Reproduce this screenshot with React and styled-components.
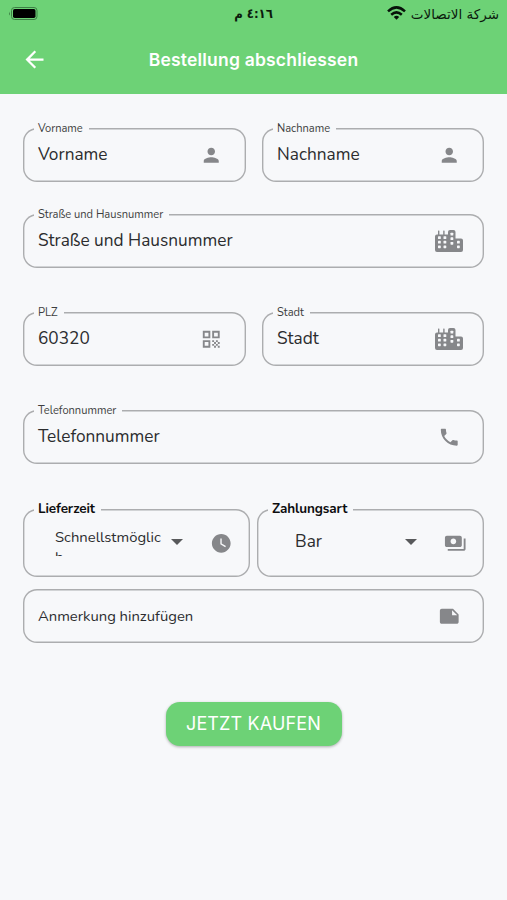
import React from "react";
import styled, { createGlobalStyle } from "styled-components";
import {
  MdArrowBack,
  MdPerson,
  MdQrCode,
  MdPhone,
  MdWatchLater,
  MdPayments,
  MdNote,
} from "react-icons/md";

const green = "#6dd276";
const surface = "#f7f8fa";

const GlobalStyle = createGlobalStyle`
  * { box-sizing: border-box; }
  body { margin: 0; background: ${surface}; }
  button, input { font: inherit; }
`;

const Screen = styled.div`
  width: 507px;
  height: 900px;
  overflow: hidden;
  background: ${surface};
  font-family: "Nunito", "Lato", sans-serif;
  color: #2b2c2e;
`;

const Header = styled.header`
  height: 94px;
  background: ${green};
`;

const StatusBar = styled.div`
  height: 28px;
  display: grid;
  grid-template-columns: 1fr auto 1fr;
  align-items: center;
  padding: 0 8px;
  color: #0b1a0d;
  font-family: "DejaVu Sans", sans-serif;
`;

const BatteryIcon = styled.svg`
  width: 30px;
  height: 15px;
  margin-top: -2px;
`;

const Clock = styled.span`
  font-family: "DejaVu Sans Condensed", "DejaVu Sans", sans-serif;
  font-size: 13px;
  font-weight: 700;
  font-stretch: condensed;
  line-height: 20px;
`;

const Carrier = styled.div`
  display: flex;
  justify-content: flex-end;
  align-items: center;
  gap: 5px;
  font-size: 13.5px;
  line-height: 20px;
  white-space: nowrap;
`;

const WifiIcon = styled.svg`
  width: 19px;
  height: 15px;
  margin-top: -2px;
`;

const TitleBar = styled.div`
  height: 64px;
  display: grid;
  grid-template-columns: 70px 1fr 70px;
  align-items: center;
  color: #fff;
`;

const BackButton = styled.button`
  display: flex;
  justify-content: center;
  padding: 0;
  margin: -2px 0 0 -1px;
  border: 0;
  background: none;
  color: inherit;
  font-size: 27px;
`;

const Title = styled.h1`
  margin: -1px 0 0;
  text-align: center;
  font: 600 17.5px/24px "Inter", sans-serif;
  letter-spacing: 0.2px;
`;

const Form = styled.form`
  display: flex;
  flex-direction: column;
  padding: 34px 23px 0 23px;
`;

const Row = styled.div`
  display: grid;
  grid-template-columns: ${(p) => p.$columns || "1fr"};
  column-gap: ${(p) => p.$gap || 0}px;
  margin-bottom: ${(p) => p.$space}px;
`;

const Outline = styled.div`
  position: relative;
  height: ${(p) => p.$height || 54}px;
  display: flex;
  align-items: center;
  padding: 0 ${(p) => p.$end || 35}px 0 ${(p) => p.$start || 15.5}px;
  box-shadow: inset 0 0 0 1.4px #acadaf;
  border-radius: 14px;
`;

const Label = styled.label`
  position: absolute;
  top: ${(p) => (p.$strong ? -9 : -7)}px;
  left: 11px;
  padding: 0 6px 0 4px;
  background: ${surface};
  font-size: ${(p) => (p.$strong ? 13.5 : 11.1)}px;
  font-weight: ${(p) => (p.$strong ? 700 : 400)};
  color: ${(p) => (p.$strong ? "#0d0d0e" : "#3d3e40")};
  letter-spacing: ${(p) => (p.$strong ? -0.1 : 0)}px;
  line-height: ${(p) => (p.$strong ? 18 : 16)}px;
  white-space: nowrap;
`;

const Value = styled.span`
  flex: 1;
  font-size: ${(p) => p.$size || 17.25}px;
  line-height: 24px;
  margin-top: ${(p) => p.$lift || 0}px;
  margin-left: -0.5px;
  white-space: nowrap;
`;

const WrappedValue = styled.span`
  width: 108px;
  height: 29px;
  margin-top: -4px;
  overflow: hidden;
  font-size: 14.8px;
  line-height: 20px;
  overflow-wrap: anywhere;
`;

const Icon = styled.span`
  display: flex;
  justify-content: center;
  width: 0;
  flex: none;
  color: #86878a;
  font-size: 22.5px;
  svg { flex: none; }
`;

const CitySvg = styled.svg`
  width: 28px;
  height: 22px;
`;

const Caret = styled.span`
  flex: none;
  width: 12px;
  height: 6px;
  margin: -2px ${(p) => p.$after}px 0 ${(p) => p.$before || 0}px;
  background: #58595b;
  clip-path: polygon(0 0, 100% 0, 50% 100%);
`;

const BuyButton = styled.button`
  align-self: center;
  width: 176px;
  height: 44px;
  padding: 0;
  border: 0;
  border-radius: 14px;
  background: ${green};
  box-shadow: 0 1px 3px rgba(0, 0, 0, 0.3);
  color: #fff;
  font: 400 18px/44px "Inter", sans-serif;
  letter-spacing: 0.15px;
`;

const cityWindows = [
  [3, 6.2], [3, 10.8], [3, 15.4],
  [8.5, 6.2], [8.5, 10.8], [8.5, 15.4],
  [15.5, 2.7], [15.5, 7.3], [15.5, 11.9],
  [22, 10.8], [22, 15.4],
];

function CityIcon() {
  return (
    <CitySvg viewBox="0 0 28 22" fill="currentColor">
      <path d="M3 4.5V.8Q3.7 0 4.4.8V4.5H8.2V.8Q8.9 0 9.6.8V4.5H13V2Q13 0 15 0H18.5Q20.5 0 20.5 2V8.6H26Q28 8.6 28 10.6V20Q28 22 26 22H2Q0 22 0 20V6.5Q0 4.5 2 4.5Z" />
      {cityWindows.map(([x, y]) => (
        <rect key={`${x}-${y}`} x={x} y={y} width="2.8" height="2.8" rx="0.6" fill={surface} />
      ))}
    </CitySvg>
  );
}

function Field({ label, value, icon, size }) {
  return (
    <Outline>
      {label && <Label>{label}</Label>}
      <Value $size={size}>{value}</Value>
      <Icon>{icon}</Icon>
    </Outline>
  );
}

export default function App() {
  return (
    <Screen>
      <GlobalStyle />
      <Header>
        <StatusBar>
          <BatteryIcon viewBox="0 0 30 15">
            <rect x="3.5" y="1.5" width="25.5" height="12" rx="3" fill="none" stroke="#3c8044" />
            <rect x="5" y="3" width="22.5" height="9" rx="1.7" fill="#000" />
            <path d="M2 5.5Q0.3 7.5 2 9.5Z" fill="#3c8044" />
          </BatteryIcon>
          <Clock dir="rtl">٤:١٦ م</Clock>
          <Carrier>
            <WifiIcon viewBox="0 0 19 15" fill="none" stroke="#07120a" strokeWidth="2.5">
              <path d="M1 5.3Q9.5 -2.5 18 5.3" />
              <path d="M4.2 8.7Q9.5 4 14.8 8.7" />
              <path d="M6.8 11Q9.5 8.7 12.2 11L9.5 13.8Z" fill="#07120a" stroke="none" />
            </WifiIcon>
            <span dir="rtl">شركة الاتصالات</span>
          </Carrier>
        </StatusBar>
        <TitleBar>
          <BackButton aria-label="Zurück"><MdArrowBack /></BackButton>
          <Title>Bestellung abschliessen</Title>
        </TitleBar>
      </Header>
      <Form onSubmit={(e) => e.preventDefault()}>
        <Row $columns="223px 222px" $gap={16} $space={32}>
          <Field label="Vorname" value="Vorname" icon={<MdPerson />} />
          <Field label="Nachname" value="Nachname" icon={<MdPerson />} />
        </Row>
        <Row $space={44}>
          <Field label="Straße und Hausnummer" value="Straße und Hausnummer" icon={<CityIcon />} />
        </Row>
        <Row $columns="223px 222px" $gap={16} $space={44}>
          <Field label="PLZ" value="60320" icon={<MdQrCode />} />
          <Field label="Stadt" value="Stadt" icon={<CityIcon />} />
        </Row>
        <Row $space={45}>
          <Field label="Telefonnummer" value="Telefonnummer" icon={<MdPhone />} />
        </Row>
        <Row $columns="227px 227px" $gap={7} $space={12}>
          <Outline $height={68} $start={32} $end={29}>
            <Label $strong>Lieferzeit</Label>
            <WrappedValue>Schnellstmöglich</WrappedValue>
            <Caret $before={8} $after={38} />
            <Icon><MdWatchLater /></Icon>
          </Outline>
          <Outline $height={68} $start={38.5} $end={29}>
            <Label $strong>Zahlungsart</Label>
            <Value $lift={-2}>Bar</Value>
            <Caret $after={38} />
            <Icon><MdPayments /></Icon>
          </Outline>
        </Row>
        <Row $space={59}>
          <Field value="Anmerkung hinzufügen" size={14.8} icon={<MdNote />} />
        </Row>
        <BuyButton>JETZT KAUFEN</BuyButton>
      </Form>
    </Screen>
  );
}
